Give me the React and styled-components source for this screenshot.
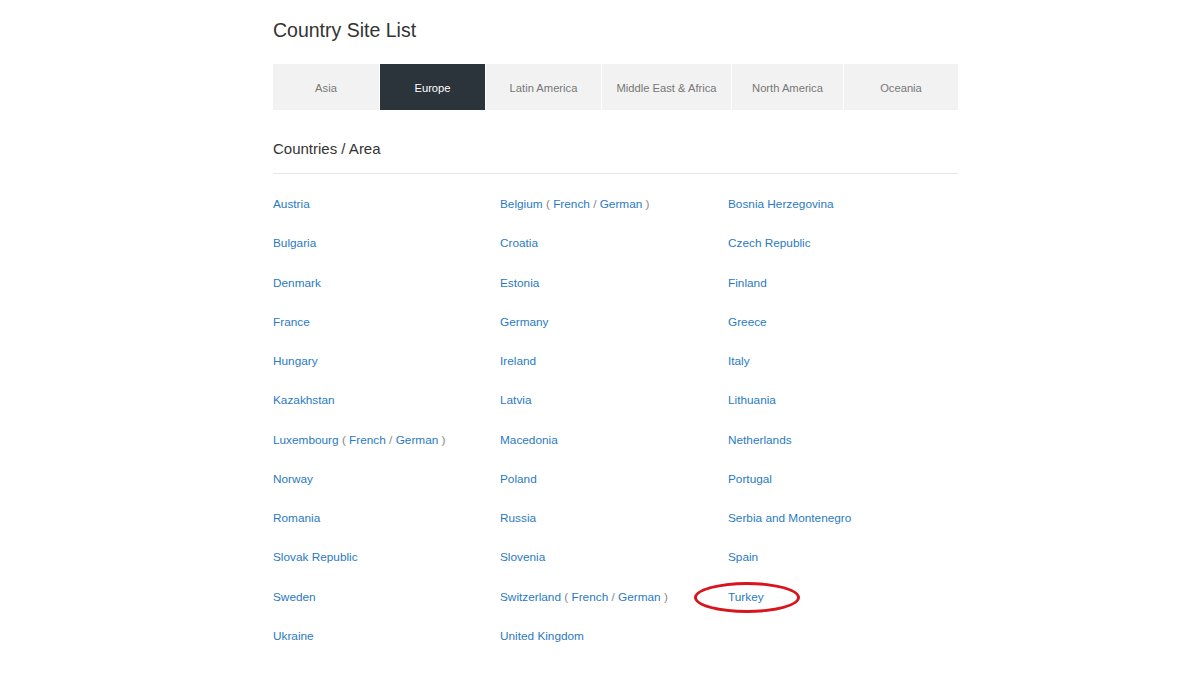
import React from "react";
import styled, { createGlobalStyle } from "styled-components";

const GlobalStyle = createGlobalStyle`
  body {
    margin: 0;
    background: #fff;
    font-family: "Liberation Sans", Arial, sans-serif;
  }
`;

const Page = styled.div`
  width: 685px;
  padding: 18px 0 30px 273px;
`;

const Title = styled.h1`
  margin: 0;
  font-size: 19.5px;
  line-height: 24px;
  font-weight: 400;
  color: #333;
`;

const Tabs = styled.div`
  display: grid;
  grid-template-columns: 106fr 105fr 115fr 129fr 111fr 114fr;
  gap: 1px;
  margin-top: 22px;
  height: 46px;
`;

const Tab = styled.div`
  display: flex;
  align-items: center;
  justify-content: center;
  padding-top: 2px;
  font-size: 11.2px;
  color: ${(p) => (p.$active ? "#fff" : "#777")};
  background: ${(p) => (p.$active ? "#2b333b" : "#f2f2f2")};
  cursor: pointer;
`;

const SubTitle = styled.h2`
  margin: 30px 0 0;
  font-size: 15px;
  line-height: 18px;
  font-weight: 400;
  color: #333;
  padding-bottom: 15px;
  border-bottom: 1px solid #e6e6e6;
`;

const Grid = styled.div`
  display: grid;
  grid-template-columns: 227px 228px 1fr;
  grid-auto-rows: 39.27px;
  margin-top: 11px;
`;

const Cell = styled.div`
  position: relative;
  font-size: 11.8px;
  line-height: 39px;
  color: #999;
  white-space: nowrap;
`;

const Link = styled.a`
  color: #2a7ac2;
  text-decoration: none;
`;

const Paren = styled.span`
  color: #888;
`;

const Circle = styled.span`
  position: absolute;
  left: -34px;
  top: 4px;
  width: 106px;
  height: 31px;
  border: 3px solid #d8141c;
  border-radius: 50%;
  box-sizing: border-box;
  pointer-events: none;
`;

const tabs = ["Asia", "Europe", "Latin America", "Middle East & Africa", "North America", "Oceania"];

const countries = [
  "Austria", ["Belgium"], "Bosnia Herzegovina",
  "Bulgaria", "Croatia", "Czech Republic",
  "Denmark", "Estonia", "Finland",
  "France", "Germany", "Greece",
  "Hungary", "Ireland", "Italy",
  "Kazakhstan", "Latvia", "Lithuania",
  ["Luxembourg"], "Macedonia", "Netherlands",
  "Norway", "Poland", "Portugal",
  "Romania", "Russia", "Serbia and Montenegro",
  "Slovak Republic", "Slovenia", "Spain",
  "Sweden", ["Switzerland"], "Turkey",
  "Ukraine", "United Kingdom",
];

const Country = ({ item }) => {
  if (Array.isArray(item)) {
    return (
      <Cell>
        <Link href="#">{item[0]}</Link> <Paren>(</Paren> <Link href="#">French</Link>{" "}
        <Paren>/</Paren> <Link href="#">German</Link> <Paren>)</Paren>
      </Cell>
    );
  }
  return (
    <Cell>
      <Link href="#">{item}</Link>
      {item === "Turkey" && <Circle />}
    </Cell>
  );
};

export default function App() {
  return (
    <>
      <GlobalStyle />
      <Page>
        <Title>Country Site List</Title>
        <Tabs>
          {tabs.map((t) => (
            <Tab key={t} $active={t === "Europe"}>{t}</Tab>
          ))}
        </Tabs>
        <SubTitle>Countries / Area</SubTitle>
        <Grid>
          {countries.map((c, i) => (
            <Country key={i} item={c} />
          ))}
        </Grid>
      </Page>
    </>
  );
}
